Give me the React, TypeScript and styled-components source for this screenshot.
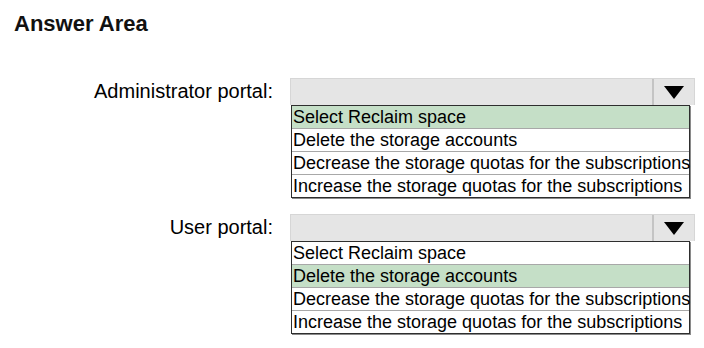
import styled, { createGlobalStyle } from 'styled-components';
import { Fragment, FunctionComponent } from 'react';

const GlobalStyle = createGlobalStyle`
    html, body {
        margin: 0;
        padding: 0;
        background: #fff;
    }

    body {
        font-family: 'Liberation Sans', Arial, sans-serif;
        color: #000;
    }
`;

const Page = styled.div`
    width: 704px;
    height: 348px;
    overflow: hidden;
    padding: 11px 0 0 14px;
    box-sizing: border-box;
`;

const Heading = styled.h2`
    margin: 0 0 41px;
    font-size: 22px;
    line-height: 26px;
    font-weight: 700;
    color: #111;
`;

const Grid = styled.div`
    display: grid;
    grid-template-columns: 259px 405px;
    column-gap: 17px;
    row-gap: 16px;
    align-items: start;
`;

const Label = styled.label`
    font-size: 20px;
    line-height: 26px;
    text-align: right;
    white-space: nowrap;
`;

const Dropdown = styled.div`
    display: flex;
    flex-direction: column;
`;

const Header = styled.div`
    display: flex;
    height: 27px;
    box-sizing: border-box;
    background: #e5e5e5;
    border: 1px solid #d6d6d6;
    border-bottom: 0;
`;

const Field = styled.div`
    flex: 1;
`;

const ArrowButton = styled.div`
    width: 40px;
    display: flex;
    align-items: center;
    justify-content: center;
    border-left: 2px solid #c4c4c4;
`;

const List = styled.ul`
    list-style: none;
    margin: 0 0 0 1px;
    padding: 0;
    width: 399px;
    box-sizing: border-box;
    border: 1px solid #2e2e2e;
    box-shadow: 1px 1px 0 #8a8a8a;
    background: #fff;
`;

const Option = styled.li<{ $selected: boolean }>`
    height: 22px;
    line-height: 22px;
    padding-left: 1px;
    font-size: 18px;
    white-space: nowrap;
    overflow: visible;
    background: ${({ $selected }) => ($selected ? '#c5dfc7' : '#fff')};

    & + & {
        border-top: 1px solid #a8a8a8;
    }
`;

const options = [
    'Select Reclaim space',
    'Delete the storage accounts',
    'Decrease the storage quotas for the subscriptions',
    'Increase the storage quotas for the subscriptions',
];

const questions = [
    { label: 'Administrator portal:', selected: 0 },
    { label: 'User portal:', selected: 1 },
];

const App: FunctionComponent = () => {
    return (
        <Page>
            <GlobalStyle />
            <Heading>Answer Area</Heading>

            <Grid>
                {questions.map((q) => (
                    <Fragment key={q.label}>
                        <Label>{q.label}</Label>
                        <Dropdown>
                            <Header>
                                <Field />
                                <ArrowButton>
                                    <svg width="20" height="13" viewBox="0 0 20 13">
                                        <polygon points="0,0 20,0 10,13" fill="#000" />
                                    </svg>
                                </ArrowButton>
                            </Header>
                            <List>
                                {options.map((o, i) => (
                                    <Option key={o} $selected={i === q.selected}>
                                        {o}
                                    </Option>
                                ))}
                            </List>
                        </Dropdown>
                    </Fragment>
                ))}
            </Grid>
        </Page>
    );
};

export default App;
